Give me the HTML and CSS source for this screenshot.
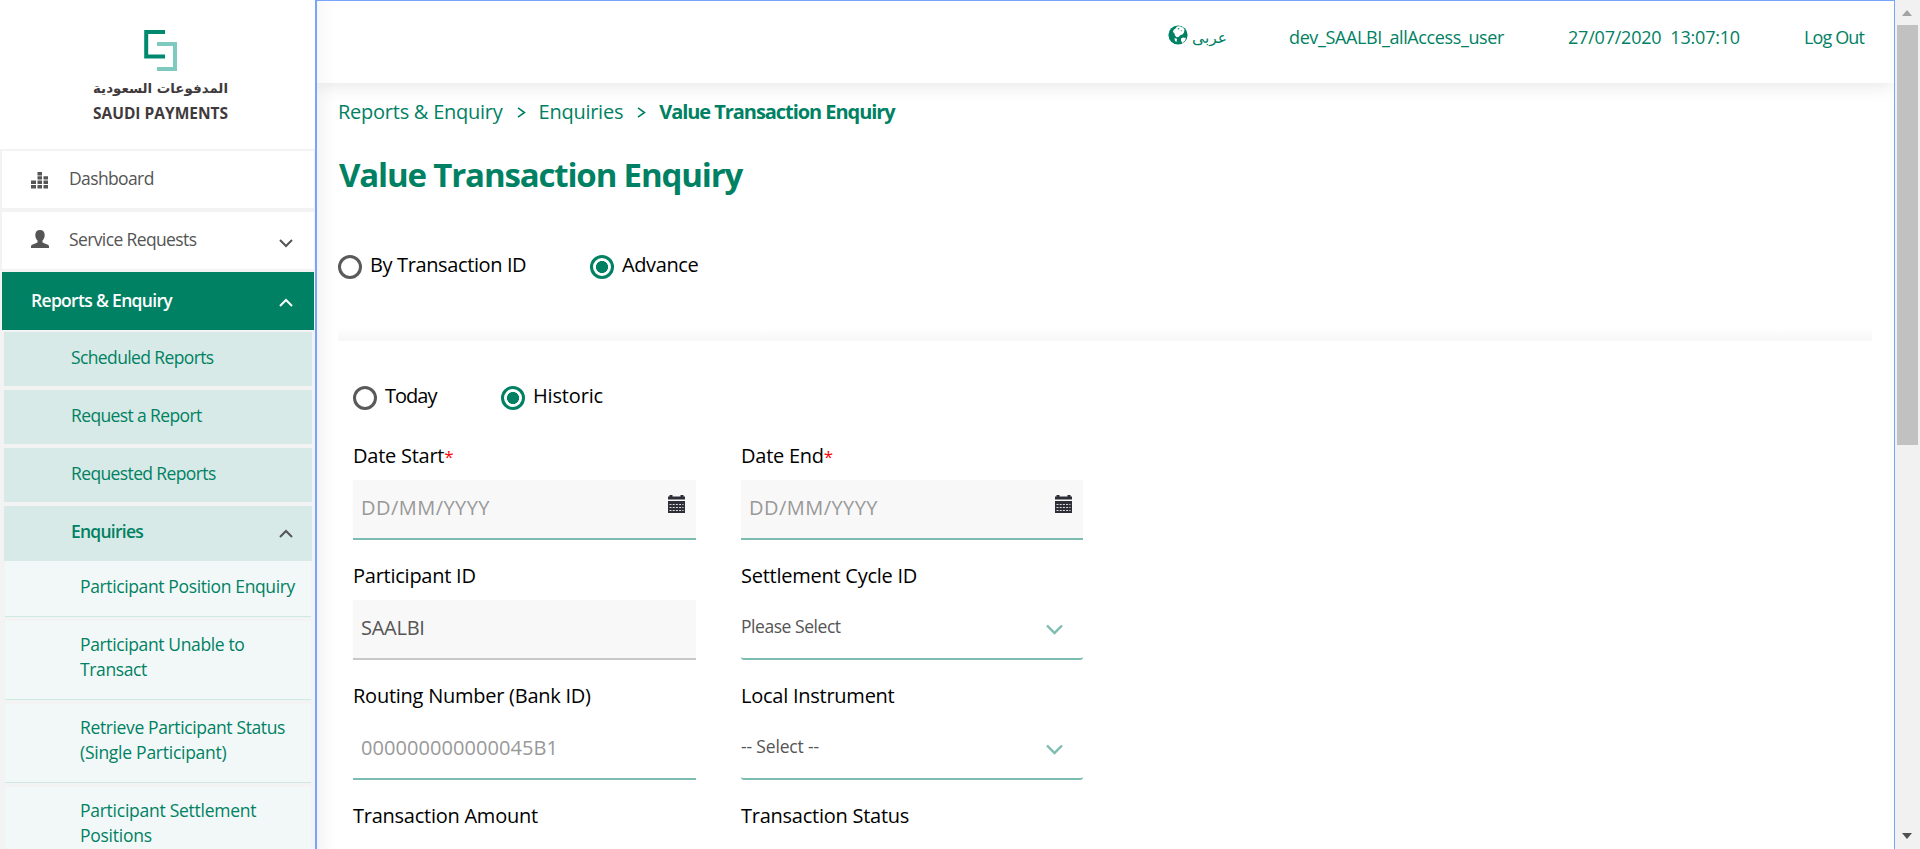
FILE: index.html
```html
<!DOCTYPE html>
<html lang="en">
<head>
<meta charset="utf-8">
<title>Value Transaction Enquiry</title>
<link rel="stylesheet" href="styles.css">
</head>
<body>
<div class="app">
  <aside class="sidebar">
    <div class="logo">
      <svg class="logo-mark" width="34" height="42" viewBox="0 0 34 42"><path d="M21 2H2.200V26.500H21" fill="none" stroke="#00896f" stroke-width="4"/><path d="M13 14H31V39H13" fill="none" stroke="#7fcabf" stroke-width="4"/></svg>
      <div class="logo-ar" lang="ar" dir="rtl">المدفوعات السعودية</div>
      <div class="logo-en">SAUDI PAYMENTS</div>
    </div>
    <nav class="menu">
      <a class="item"><svg class="ico" width="18" height="18" viewBox="0 0 18 18" fill="#555"><path d="M0 9.500h5v3.500H0zM0 14h5v3.500H0zM6.500 1h4.500v3.500H6.500zM6.500 5.300h4.500v3.300H6.500zM6.500 9.500h4.500v3.500H6.500zM6.500 14h4.500v3.500H6.500zM12.500 5.300H17v3.300h-4.500zM12.500 9.500H17v3.500h-4.500zM12.500 14H17v3.500h-4.500z"/></svg><span>Dashboard</span></a>
      <a class="item"><svg class="ico user-ico" width="18" height="18" viewBox="0 0 18 18" fill="#555"><path d="M9 0C12 0 13.700 1.900 13.700 5c0 2.300-.9 4.300-2.200 5.500v2l5.300 2.300c.9.400 1.200 1.100 1.200 2V18H0v-1.200c0-.9.300-1.600 1.200-2l5.300-2.300v-2C5.200 9.300 4.300 7.300 4.300 5 4.300 1.900 6 0 9 0z"/></svg><span>Service Requests</span><svg class="chev" width="14" height="9" viewBox="0 0 14 9"><path d="M1 1l6 6 6-6" stroke="#555"/></svg></a>
      <a class="item active"><span>Reports &amp; Enquiry</span><svg class="chev" width="14" height="9" viewBox="0 0 14 9"><path d="M1 8l6-6 6 6" stroke="#fff"/></svg></a>
      <div class="submenu">
        <a class="sub">Scheduled Reports</a>
        <a class="sub">Request a Report</a>
        <a class="sub">Requested Reports</a>
        <a class="sub open"><span>Enquiries</span><svg class="chev" width="14" height="9" viewBox="0 0 14 9"><path d="M1 8l6-6 6 6" stroke="#555"/></svg></a>
      </div>
      <div class="leaves">
        <a class="leaf">Participant Position Enquiry</a>
        <a class="leaf">Participant Unable to<br>Transact</a>
        <a class="leaf">Retrieve Participant Status<br><span class="loose">(Single Participant)</span></a>
        <a class="leaf loose">Participant Settlement<br>Positions</a>
      </div>
    </nav>
  </aside>
  <div class="page">
    <header class="topbar">
      <a class="lang"><svg width="20" height="20" viewBox="0 0 20 20"><circle cx="10" cy="10" r="9.600" fill="#008163"/><path fill="#fff" d="M9 1.500l2.500-.3 3.500 1.300 1.500 2-.5 3-1.500 2-2 .5L10.500 12l-2 .3L7 10.500l-.5-2L5 7l.5-2L7.500 3.500z"/><path fill="#fff" d="M13 13.500l2-1 3 .5-1 2.500-2.500 2.500-1.500-2zM6.500 13l2.500 1-.5 3-1.500-1z"/><path fill="#008163" d="M9.500 3.500l1.500-.5.500 1-1.500.5zM12.500 5l1.500.5-.5 1z"/></svg><span lang="ar" class="ar">عربی</span></a>
      <span class="user">dev_SAALBI_allAccess_user</span>
      <span class="clock">27/07/2020&nbsp; 13:07:10</span>
      <a class="logout">Log Out</a>
    </header>
    <main class="content">
      <div class="crumbs"><a>Reports &amp; Enquiry</a><svg width="9" height="11" viewBox="0 0 9 11"><path d="M1 0.800l6.500 4.700L1 10.200"/></svg><a>Enquiries</a><svg width="9" height="11" viewBox="0 0 9 11"><path d="M1 0.800l6.500 4.700L1 10.200"/></svg><b>Value Transaction Enquiry</b></div>
      <h1>Value Transaction Enquiry</h1>
      <div class="radios mode">
        <label class="radio"><i></i><span>By Transaction ID</span></label>
        <label class="radio on"><i></i><span>Advance</span></label>
      </div>
      <div class="divider"></div>
      <div class="radios period">
        <label class="radio"><i></i><span class="today">Today</span></label>
        <label class="radio on"><i></i><span>Historic</span></label>
      </div>
      <form class="fields">
        <div class="field"><label>Date Start<em>*</em></label><div class="input filled hint"><span class="date">DD/MM/YYYY</span><svg width="17" height="18" viewBox="0 0 17 18"><path fill="#2e2e38" d="M0 1.500h1.500V0h3v1.500h8V0h3v1.500H17v3H0zM0 6h17v12H0z"/><path d="M1.500 9.500h14M1.500 12.500h14M1.500 15.500h14" stroke="#ddd" stroke-width="1" stroke-dasharray="2 1.200"/></svg></div></div>
        <div class="field"><label>Date End<em>*</em></label><div class="input filled hint"><span class="date">DD/MM/YYYY</span><svg width="17" height="18" viewBox="0 0 17 18"><path fill="#2e2e38" d="M0 1.500h1.500V0h3v1.500h8V0h3v1.500H17v3H0zM0 6h17v12H0z"/><path d="M1.500 9.500h14M1.500 12.500h14M1.500 15.500h14" stroke="#ddd" stroke-width="1" stroke-dasharray="2 1.200"/></svg></div></div>
        <div class="field"><label>Participant ID</label><div class="input filled locked"><span>SAALBI</span></div></div>
        <div class="field"><label>Settlement Cycle ID</label><div class="select"><span>Please Select</span><svg width="17" height="12" viewBox="0 0 17 12"><path d="M1 1.500l7.500 7.500 7.500-7.500"/></svg></div></div>
        <div class="field"><label>Routing Number (Bank ID)</label><div class="input hint"><span class="digits">000000000000045B1</span></div></div>
        <div class="field"><label>Local Instrument</label><div class="select"><span class="none">-- Select --</span><svg width="17" height="12" viewBox="0 0 17 12"><path d="M1 1.500l7.500 7.500 7.500-7.500"/></svg></div></div>
        <div class="field"><label>Transaction Amount</label></div>
        <div class="field"><label>Transaction Status</label></div>
      </form>
    </main>
  </div>
  <div class="scrollbar"><i class="up"></i><div class="thumb"></div><i class="down"></i></div>
</div>
</body>
</html>
```
FILE: styles.css
```css
* { box-sizing: border-box; }
body {
  margin: 0;
  font-family: "Open Sans", "Noto Sans", sans-serif;
  font-size: 20px;
  letter-spacing: -0.25px;
  color: #000;
  background: #fff;
  overflow: hidden;
}
.app { display: flex; width: 1920px; height: 849px; overflow: hidden; }
svg { display: block; flex: none; }

.sidebar { width: 315px; flex: none; background: #f3f3f3; overflow: hidden; }
.logo { height: 149px; background: #fff; display: flex; flex-direction: column; align-items: center; padding: 30px 0 0 6px; }
.logo-ar { height: 28px; margin-top: 3px; font: bold 13.4px/28px "DejaVu Sans", sans-serif; letter-spacing: 0; color: #413a3c; white-space: nowrap; }
.logo-en { height: 20px; font-size: 15.5px; line-height: 20px; font-weight: 700; letter-spacing: 0; color: #413a3c; white-space: nowrap; }
.menu { padding-top: 2px; font-size: 17.5px; letter-spacing: -0.62px; color: #555; }
.menu a { display: block; }
.menu .item { display: flex; align-items: center; height: 57px; margin: 0 1px 4px 2px; background: #fff; padding: 0 21px 4px 29px; }
.menu .item + .item { margin-bottom: 3px; }
.ico { margin: 5px 20px 0 0; }
.user-ico { margin-top: 1px; }
.chev { margin-left: auto; position: relative; top: 5px; fill: none; stroke-width: 2; }
.menu .active { height: 58px; margin-bottom: 2px !important; padding-bottom: 3px; background: #008163; color: #fff; font-weight: 600; letter-spacing: -0.68px; }
.active .chev { top: 3px; }
.submenu { margin: 0 3px 0 4px; color: #008163; display: flex; flex-direction: column; gap: 4px; }
.menu .sub { display: flex; align-items: center; height: 54px; background: #d8eae7; padding: 0 19px 5px 67px; }
.menu .open { height: 55px; font-weight: 600; letter-spacing: -0.76px; }
.open .chev { top: 2px; }
.leaves { margin: 0 4px 0 5px; color: #008163; letter-spacing: -0.37px; display: flex; flex-direction: column; gap: 4px; }
.menu .leaf { background: #f2f8f8; border-bottom: 1px solid #cdeae2; padding: 11px 0 17px 75px; line-height: 25px; white-space: nowrap; }
.menu .leaf:first-child { padding-top: 13px; }
.loose { letter-spacing: -0.26px; }

.page { width: 1580px; flex: none; border: solid #76a5fb; border-width: 1px 1px 0 2px; overflow: hidden; background: linear-gradient(90deg, #f5f5f5, #fff 18px); }
.topbar { position: relative; height: 82px; box-shadow: 0 0 20px rgba(0,0,0,.13); color: #008163; font-size: 18px; display: flex; justify-content: flex-end; padding: 23px 30px 0 0; line-height: 26px; background: linear-gradient(90deg, #f8f8f8, #fff 18px); white-space: nowrap; }
.lang { display: flex; gap: 4px; margin-right: 65px; width: 56px; padding-top: 1px; }
.ar { font-family: "DejaVu Sans", sans-serif; font-size: 15.5px; letter-spacing: 0; }
.user { margin-right: 65px; width: 214px; letter-spacing: -0.38px; }
.clock { margin-right: 64px; width: 172px; letter-spacing: -0.21px; }
.logout { width: 60px; letter-spacing: -0.88px; }

.content { padding: 16px 22px 0 21px; }
.crumbs { display: flex; align-items: center; height: 24px; color: #008163; white-space: nowrap; }
.crumbs svg { fill: none; stroke: #008163; stroke-width: 1.6; margin: 2px 13px 0 14px; }
.crumbs b { font-weight: 700; letter-spacing: -1.05px; }
h1 { margin: 32px 0 0 1px; height: 40px; font-size: 33px; line-height: 40px; font-weight: 700; letter-spacing: -1.15px; color: #008163; }
.radios { display: flex; height: 24px; }
.radio { display: flex; gap: 8px; line-height: 20px; white-space: nowrap; }
.radio i { width: 24px; height: 24px; border: 3px solid #5a5a5a; border-radius: 50%; background: #fff; }
.on i { border-color: #008163; background: radial-gradient(circle, #008163 5.7px, #fff 6.3px); }
.mode { margin-top: 60px; letter-spacing: -0.38px; }
.mode .radio { width: 252px; }
.divider { height: 14px; margin-top: 48px; background: linear-gradient(#fff, #f7f7f7); }
.period { margin: 45px 0 0 15px; letter-spacing: -0.16px; }
.period .radio { width: 148px; }
.today { letter-spacing: -1px; }
.fields { display: grid; grid-template-columns: 343px 342px; column-gap: 45px; row-gap: 24px; margin: 34px 0 0 15px; }
.field label { display: block; height: 24px; line-height: 24px; margin-bottom: 12px; white-space: nowrap; }
.field em { font-style: normal; font-size: 17px; line-height: 1; color: #f00; }
.input { display: flex; align-items: center; justify-content: space-between; height: 60px; border-bottom: 2px solid #7dbcb1; padding: 0 11px 4px 8px; color: #555; }
.input svg { margin-top: -6px; }
.filled { background: #f8f8f8; }
.hint { color: #999; }
.date { letter-spacing: 0.46px; }
.digits { letter-spacing: 0.07px; }
.locked { border-color: #c8c8c8; }
.select { display: flex; align-items: center; justify-content: space-between; height: 60px; border-bottom: 2px solid #7dbcb1; border-radius: 3px; padding: 0 20px 6px 0; font-size: 17.5px; letter-spacing: -0.45px; color: #555; }
.select .none { letter-spacing: -0.16px; }
.select svg { fill: none; stroke: #7dbcb1; stroke-width: 2.4; margin-top: 8px; }

.scrollbar { width: 25px; flex: none; background: #f1f1f1; display: flex; flex-direction: column; align-items: center; padding: 10px 1px 10px 0; }
.scrollbar i { border: 5.500px solid transparent; border-top-width: 0; border-bottom: 6px solid #a3a3a3; }
.thumb { width: 21px; height: 420px; margin-top: 9px; background: #c1c1c1; }
.scrollbar .down { margin-top: auto; border-top: 6px solid #505050; border-bottom-width: 0; }
```
